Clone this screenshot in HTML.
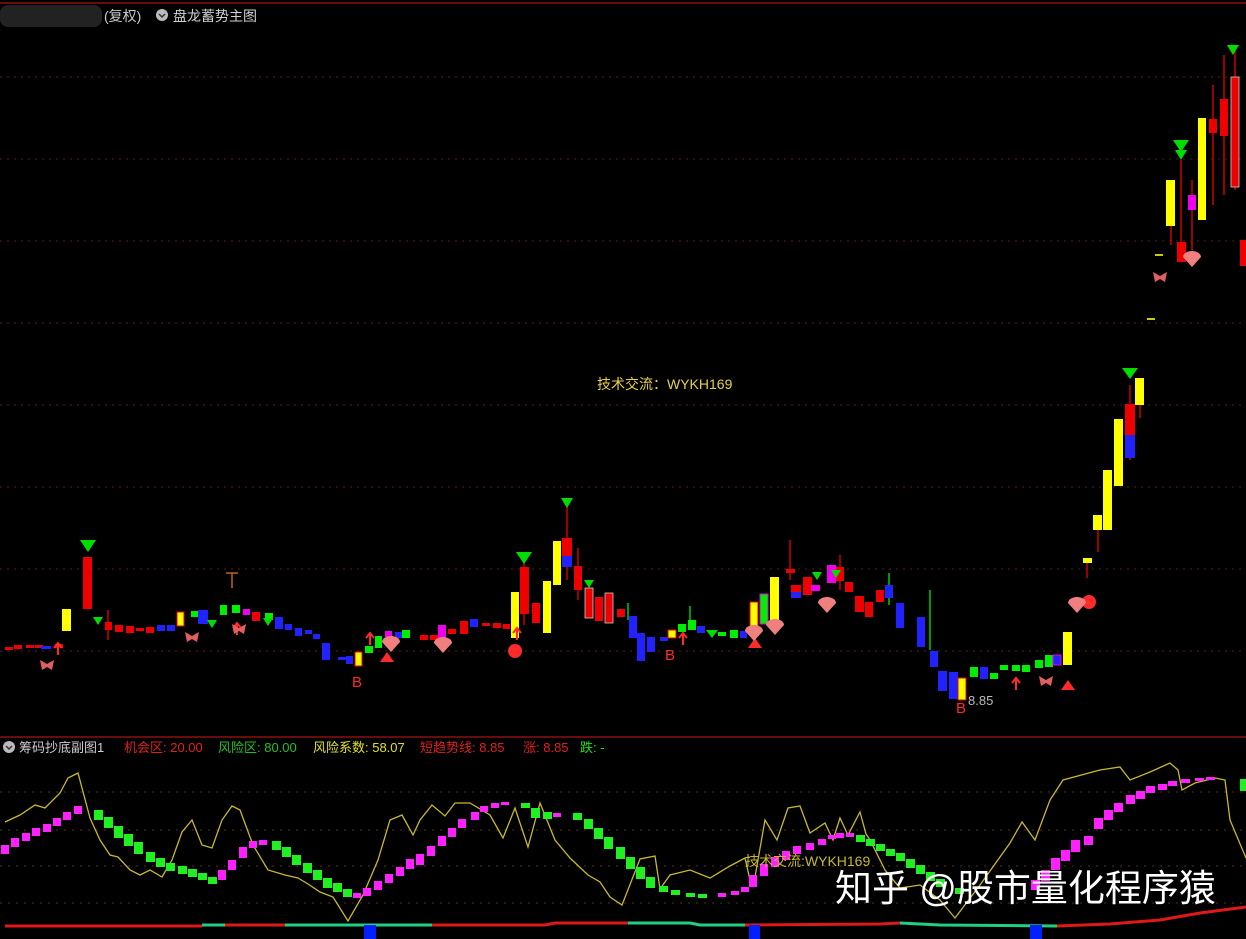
<!DOCTYPE html>
<html><head><meta charset="utf-8"><style>
html,body{margin:0;padding:0;background:#000;width:1246px;height:939px;overflow:hidden}
svg{display:block}
.t{font-family:"Liberation Sans","Noto Sans CJK SC",sans-serif}
</style></head><body>
<svg width="1246" height="939" viewBox="0 0 1246 939" xmlns="http://www.w3.org/2000/svg">
<rect width="1246" height="939" fill="#000"/>
<line x1="0" y1="3" x2="1246" y2="3" stroke="#8b1010" stroke-width="1.5"/>
<line x1="0" y1="737" x2="1246" y2="737" stroke="#8b1010" stroke-width="1.5"/>
<g stroke="#5a1a1a" stroke-dasharray="2,5" stroke-width="1">
<line x1="0" y1="77" x2="1246" y2="77"/><line x1="0" y1="159" x2="1246" y2="159"/>
<line x1="0" y1="241" x2="1246" y2="241"/><line x1="0" y1="323" x2="1246" y2="323"/>
<line x1="0" y1="405" x2="1246" y2="405"/><line x1="0" y1="487" x2="1246" y2="487"/>
<line x1="0" y1="569" x2="1246" y2="569"/><line x1="0" y1="651" x2="1246" y2="651"/>
</g>
<g stroke="#5a3010" stroke-dasharray="2,6" stroke-width="1">
<line x1="0" y1="792" x2="1246" y2="792"/><line x1="0" y1="830" x2="1246" y2="830"/>
<line x1="0" y1="866" x2="1246" y2="866"/><line x1="0" y1="903" x2="1246" y2="903"/>
</g>
<rect x="0" y="5" width="102" height="22" rx="8" fill="#2a2a2a" opacity="0.8"/>
<text x="104" y="21" class="t" font-size="14" fill="#c8c8c8">(复权)</text>
<circle cx="162" cy="15" r="6" fill="#bbb"/><path d="M159 14l3 3 3-3" stroke="#333" fill="none" stroke-width="1.5"/>
<text x="173" y="21" class="t" font-size="14" fill="#d0d0d0">盘龙蓄势主图</text>
<text x="597" y="389" class="t" font-size="14" fill="#e8d040">技术交流：WYKH169</text>
<g stroke="#c00" stroke-width="1.5">
<line x1="232" y1="573" x2="232" y2="588" stroke="#c06020"/><line x1="226" y1="573" x2="238" y2="573" stroke="#c06020"/>
<line x1="108" y1="610" x2="108" y2="640"/><line x1="524" y1="555" x2="524" y2="625"/>
<line x1="567" y1="500" x2="567" y2="580"/><line x1="578" y1="548" x2="578" y2="600"/>
<line x1="790" y1="540" x2="790" y2="580"/><line x1="840" y1="555" x2="840" y2="590"/>
<line x1="1087" y1="563" x2="1087" y2="578"/><line x1="1098" y1="530" x2="1098" y2="552"/>
<line x1="1130" y1="385" x2="1130" y2="460"/><line x1="1140" y1="405" x2="1140" y2="418"/>
<line x1="1171" y1="226" x2="1171" y2="245"/><line x1="1181" y1="160" x2="1181" y2="262"/>
<line x1="1192" y1="180" x2="1192" y2="250"/><line x1="1213" y1="85" x2="1213" y2="205"/>
<line x1="1224" y1="55" x2="1224" y2="195"/><line x1="1235" y1="50" x2="1235" y2="190"/>
</g>
<g stroke="#0c0" stroke-width="1.5">
<line x1="930" y1="590" x2="930" y2="650"/><line x1="889" y1="573" x2="889" y2="605"/>
<line x1="628" y1="603" x2="628" y2="620"/><line x1="690" y1="606" x2="690" y2="625"/>
</g>
<g>
<rect x="5" y="647" width="8" height="3" fill="#e00"/><rect x="14" y="645" width="8" height="4" fill="#e00"/><rect x="26" y="645" width="8" height="3" fill="#e00"/><rect x="35" y="645" width="8" height="3" fill="#e00"/><rect x="41" y="646" width="10" height="3" fill="#22f"/><rect x="55" y="644" width="8" height="4" fill="#e00"/>
<rect x="62" y="609" width="9" height="22" fill="#ff0"/>
<rect x="83" y="557" width="9" height="52" fill="#e00"/>
<rect x="105" y="622" width="7" height="8" fill="#e00"/><rect x="115" y="625" width="8" height="7" fill="#e00"/><rect x="126" y="626" width="8" height="7" fill="#e00"/><rect x="136" y="628" width="8" height="3" fill="#e00"/><rect x="146" y="627" width="8" height="6" fill="#e00"/><rect x="157" y="625" width="8" height="6" fill="#22f"/><rect x="167" y="625" width="8" height="6" fill="#22f"/><rect x="177" y="612" width="7" height="14" fill="#ff0" stroke="#e00"/><rect x="191" y="611" width="7" height="6" fill="#0e0"/><rect x="198" y="610" width="10" height="14" fill="#22f"/><rect x="220" y="605" width="7" height="10" fill="#0e0"/><rect x="232" y="605" width="8" height="8" fill="#0e0"/><rect x="243" y="609" width="7" height="6" fill="#e0e"/><rect x="252" y="612" width="8" height="9" fill="#e00"/><rect x="265" y="613" width="8" height="7" fill="#0e0"/><rect x="275" y="617" width="8" height="12" fill="#22f"/><rect x="285" y="624" width="7" height="6" fill="#22f"/><rect x="295" y="628" width="7" height="8" fill="#22f"/><rect x="305" y="630" width="7" height="4" fill="#22f"/><rect x="313" y="634" width="7" height="5" fill="#22f"/><rect x="322" y="643" width="8" height="17" fill="#22f"/><rect x="338" y="657" width="8" height="3" fill="#22f"/><rect x="346" y="656" width="7" height="8" fill="#22f"/><rect x="355" y="652" width="7" height="14" fill="#ff0" stroke="#e00"/><rect x="365" y="646" width="8" height="7" fill="#0e0"/><rect x="375" y="636" width="7" height="12" fill="#0e0"/><rect x="385" y="631" width="7" height="6" fill="#e0e"/><rect x="395" y="632" width="8" height="6" fill="#22f"/><rect x="402" y="630" width="8" height="8" fill="#0e0"/>
<rect x="420" y="635" width="8" height="5" fill="#e00"/><rect x="430" y="635" width="8" height="5" fill="#e00"/><rect x="438" y="625" width="8" height="14" fill="#e0e"/><rect x="448" y="629" width="8" height="5" fill="#e00"/><rect x="460" y="621" width="8" height="13" fill="#e00"/><rect x="470" y="619" width="8" height="8" fill="#22f"/><rect x="482" y="623" width="8" height="3" fill="#e00"/><rect x="493" y="623" width="8" height="5" fill="#e00"/><rect x="503" y="624" width="7" height="5" fill="#e00"/>
<rect x="511" y="592" width="8" height="46" fill="#ff0"/><rect x="520" y="567" width="9" height="47" fill="#e00"/><rect x="532" y="603" width="8" height="20" fill="#e00"/><rect x="543" y="581" width="8" height="52" fill="#ff0"/><rect x="553" y="541" width="8" height="44" fill="#ff0"/><rect x="562" y="538" width="10" height="18" fill="#e00"/><rect x="562" y="556" width="10" height="11" fill="#22f"/><rect x="574" y="566" width="8" height="24" fill="#e00"/><rect x="585" y="588" width="8" height="30" fill="#e00" stroke="#ccc" stroke-width="0.8"/><rect x="595" y="597" width="8" height="24" fill="#e00"/><rect x="605" y="593" width="8" height="30" fill="#e00" stroke="#ccc" stroke-width="0.8"/><rect x="617" y="609" width="8" height="8" fill="#e00"/><rect x="629" y="616" width="8" height="22" fill="#22f"/><rect x="637" y="633" width="8" height="28" fill="#22f"/><rect x="647" y="637" width="8" height="15" fill="#22f"/><rect x="660" y="637" width="8" height="4" fill="#22f"/><rect x="668" y="630" width="8" height="8" fill="#ff0" stroke="#e00"/><rect x="678" y="624" width="8" height="8" fill="#0e0"/><rect x="688" y="620" width="8" height="10" fill="#0e0"/><rect x="697" y="626" width="8" height="7" fill="#22f"/><rect x="718" y="632" width="8" height="4" fill="#0e0"/><rect x="730" y="630" width="8" height="8" fill="#0e0"/><rect x="740" y="631" width="7" height="7" fill="#22f"/>
<rect x="750" y="602" width="8" height="27" fill="#ff0" stroke="#e00"/><rect x="760" y="594" width="8" height="30" fill="#0e0" stroke="#e0e"/><rect x="770" y="577" width="9" height="50" fill="#ff0"/><rect x="786" y="569" width="9" height="4" fill="#e00"/><rect x="791" y="585" width="10" height="7" fill="#e00"/><rect x="791" y="592" width="10" height="6" fill="#22f"/><rect x="803" y="577" width="9" height="18" fill="#e00"/><rect x="811" y="585" width="9" height="6" fill="#e0e"/><rect x="827" y="565" width="9" height="18" fill="#e0e"/><rect x="836" y="567" width="8" height="14" fill="#e00"/><rect x="845" y="582" width="8" height="10" fill="#e00"/><rect x="855" y="596" width="9" height="16" fill="#e00"/><rect x="865" y="602" width="8" height="15" fill="#e00"/><rect x="876" y="590" width="8" height="12" fill="#e00"/><rect x="885" y="585" width="8" height="13" fill="#22f"/><rect x="896" y="603" width="8" height="25" fill="#22f"/><rect x="917" y="617" width="8" height="30" fill="#22f"/><rect x="930" y="651" width="8" height="16" fill="#22f"/><rect x="938" y="671" width="9" height="20" fill="#22f"/><rect x="949" y="672" width="9" height="27" fill="#22f"/><rect x="958" y="678" width="8" height="22" fill="#ff0" stroke="#e00"/><rect x="970" y="667" width="8" height="10" fill="#0e0"/><rect x="980" y="667" width="8" height="12" fill="#22f"/><rect x="990" y="673" width="8" height="6" fill="#0e0"/><rect x="1000" y="665" width="8" height="5" fill="#0e0"/><rect x="1012" y="665" width="8" height="6" fill="#0e0"/><rect x="1022" y="665" width="8" height="7" fill="#0e0"/><rect x="1035" y="660" width="8" height="8" fill="#0e0"/><rect x="1045" y="655" width="8" height="12" fill="#0e0"/><rect x="1053" y="655" width="8" height="10" fill="#22f" stroke="#e0e"/><rect x="1063" y="632" width="9" height="33" fill="#ff0"/>
<rect x="1083" y="558" width="9" height="5" fill="#ff0"/><rect x="1093" y="515" width="9" height="15" fill="#ff0"/><rect x="1103" y="470" width="9" height="60" fill="#ff0"/><rect x="1114" y="419" width="9" height="67" fill="#ff0"/><rect x="1125" y="404" width="10" height="31" fill="#e00"/><rect x="1125" y="435" width="10" height="23" fill="#22f"/><rect x="1135" y="378" width="9" height="27" fill="#ff0"/>
<rect x="1166" y="180" width="9" height="46" fill="#ff0"/><rect x="1177" y="242" width="9" height="20" fill="#e00"/><rect x="1188" y="195" width="8" height="15" fill="#e0e"/><rect x="1198" y="118" width="8" height="102" fill="#ff0"/><rect x="1209" y="119" width="8" height="14" fill="#e00"/><rect x="1220" y="99" width="8" height="37" fill="#e00"/><rect x="1231" y="77" width="8" height="110" fill="#e00" stroke="#ccc" stroke-width="0.8"/><rect x="1240" y="240" width="6" height="26" fill="#e00"/>
<rect x="1155" y="254" width="8" height="2" fill="#cc0"/><rect x="1147" y="318" width="8" height="2" fill="#cc0"/>
</g>
<g fill="#0d0">
<polygon points="80,540 96,540 88,552"/><polygon points="516,552 532,552 524,564"/><polygon points="1122,368 1138,368 1130,379"/>
<polygon points="1173,140 1189,140 1181,152"/><polygon points="1175,150 1187,150 1181,160"/>
<polygon points="1227,45 1239,45 1233,55"/><polygon points="561,498 573,498 567,508"/>
<polygon points="93,617 103,617 98,625"/><polygon points="207,620 217,620 212,628"/><polygon points="263,618 273,618 268,626"/><polygon points="706,630 718,630 712,638"/><polygon points="812,572 822,572 817,580"/><polygon points="831,570 841,570 836,578"/><polygon points="584,580 594,580 589,588"/>
</g>
<g fill="#ff2a2a">
<text x="352" y="687" class="t" font-size="15">B</text><text x="665" y="660" class="t" font-size="15">B</text><text x="956" y="713" class="t" font-size="15">B</text>
<polygon points="1061,690 1075,690 1068,680"/><polygon points="748,648 762,648 755,638"/><polygon points="380,662 394,662 387,652"/>
<path d="M58 655v-12M54 648l4-5 4 5" stroke="#ff2a2a" stroke-width="2" fill="none"/>
<path d="M370 645v-12M366 638l4-5 4 5" stroke="#ff2a2a" stroke-width="2" fill="none"/>
<path d="M683 645v-12M679 638l4-5 4 5" stroke="#ff2a2a" stroke-width="2" fill="none"/>
<path d="M1016 690v-12M1012 683l4-5 4 5" stroke="#ff2a2a" stroke-width="2" fill="none"/>
<path d="M517 640v-12M513 633l4-5 4 5" stroke="#ff2a2a" stroke-width="2" fill="none"/>
<path d="M237 635v-12M233 628l4-5 4 5" stroke="#ff2a2a" stroke-width="2" fill="none"/>
<circle cx="515" cy="651" r="7"/><circle cx="1089" cy="602" r="7"/>
</g>
<g fill="#e06060">
<path d="M40 660l7 4 7-4-2 10-5-3-5 3z"/><path d="M185 632l7 4 7-4-2 10-5-3-5 3z"/><path d="M232 624l7 4 7-4-2 10-5-3-5 3z"/><path d="M1153 272l7 4 7-4-2 10-5-3-5 3z"/><path d="M1039 676l7 4 7-4-2 10-5-3-5 3z"/>
</g>
<g fill="#f08080">
<path d="M382 642a9 6 0 0 1 18 0l-9 10z"/><path d="M434 643a9 6 0 0 1 18 0l-9 10z"/><path d="M745 631a9 6 0 0 1 18 0l-9 10z"/><path d="M766 625a9 6 0 0 1 18 0l-9 10z"/><path d="M818 603a9 6 0 0 1 18 0l-9 10z"/><path d="M1068 603a9 6 0 0 1 18 0l-9 10z"/><path d="M1183 257a9 6 0 0 1 18 0l-9 10z"/>
</g>
<text x="968" y="705" class="t" font-size="13" fill="#bbb">8.85</text>
<circle cx="9" cy="747" r="6" fill="#bbb"/><path d="M6 746l3 3 3-3" stroke="#333" fill="none" stroke-width="1.5"/>
<text y="752" class="t" font-size="13"><tspan x="19" fill="#ccc">筹码抄底副图1</tspan><tspan x="124" fill="#e02020">机会区: 20.00</tspan><tspan x="218" fill="#20c020">风险区: 80.00</tspan><tspan x="313" fill="#e0e020">风险系数: 58.07</tspan><tspan x="420" fill="#e02020">短趋势线: 8.85</tspan><tspan x="523" fill="#e02020">涨: 8.85</tspan><tspan x="580" fill="#20e020">跌: -</tspan></text>
<polyline fill="none" stroke="#c8b82a" stroke-width="1.3" points="5,822 20,815 35,805 45,808 60,793 68,778 78,773 90,818 100,840 110,855 118,857 130,870 140,875 150,870 162,877 172,860 182,832 192,820 202,845 212,848 222,820 232,806 240,810 253,845 268,870 285,875 298,878 308,884 320,892 333,897 348,921 363,895 378,860 390,820 402,815 413,835 420,820 432,805 445,816 455,803 470,803 490,815 503,838 515,808 528,847 540,803 555,840 570,858 588,875 600,882 610,897 622,905 640,859 655,856 660,889 670,875 690,870 710,878 730,866 745,858 750,880 755,877 765,820 777,840 788,808 800,806 810,833 825,823 833,840 840,818 848,835 860,812 866,834 870,840 885,870 900,888 920,885 940,900 955,918 980,885 1010,843 1022,822 1035,840 1050,800 1063,780 1100,770 1120,767 1130,780 1150,772 1170,763 1178,770 1182,790 1195,783 1215,778 1225,780 1230,820 1246,858"/>
<g fill="#ff20ff">
<rect x="1" y="845" width="8" height="9"/><rect x="11" y="838" width="8" height="9"/><rect x="22" y="833" width="8" height="8"/><rect x="32" y="828" width="8" height="8"/><rect x="43" y="824" width="8" height="8"/><rect x="53" y="818" width="8" height="8"/><rect x="63" y="812" width="8" height="8"/><rect x="74" y="806" width="8" height="8"/>
<rect x="218" y="870" width="8" height="10"/><rect x="228" y="860" width="8" height="10"/><rect x="239" y="847" width="8" height="11"/><rect x="249" y="841" width="8" height="7"/><rect x="259" y="840" width="8" height="5"/>
<rect x="353" y="893" width="8" height="5"/><rect x="363" y="888" width="8" height="8"/><rect x="374" y="881" width="8" height="9"/><rect x="385" y="874" width="8" height="9"/><rect x="396" y="867" width="8" height="9"/><rect x="406" y="859" width="8" height="10"/><rect x="416" y="854" width="8" height="11"/><rect x="427" y="846" width="8" height="10"/><rect x="438" y="836" width="8" height="10"/><rect x="448" y="828" width="8" height="9"/><rect x="458" y="819" width="8" height="9"/><rect x="471" y="812" width="8" height="8"/><rect x="480" y="806" width="8" height="6"/><rect x="491" y="803" width="8" height="5"/><rect x="501" y="802" width="8" height="3"/>
<rect x="553" y="813" width="8" height="4"/><rect x="718" y="893" width="8" height="4"/><rect x="731" y="891" width="8" height="4"/><rect x="741" y="887" width="8" height="5"/><rect x="749" y="875" width="8" height="12"/><rect x="760" y="864" width="8" height="12"/><rect x="771" y="857" width="8" height="10"/><rect x="782" y="851" width="8" height="9"/><rect x="793" y="846" width="8" height="8"/><rect x="806" y="843" width="8" height="7"/><rect x="818" y="839" width="8" height="6"/><rect x="836" y="833" width="8" height="5"/><rect x="846" y="833" width="8" height="4"/><rect x="828" y="835" width="8" height="4"/>
<rect x="1031" y="880" width="9" height="10"/><rect x="1041" y="870" width="9" height="11"/><rect x="1051" y="858" width="9" height="12"/><rect x="1061" y="850" width="9" height="11"/><rect x="1071" y="840" width="9" height="12"/><rect x="1084" y="836" width="9" height="9"/><rect x="1094" y="818" width="9" height="11"/><rect x="1104" y="810" width="9" height="10"/><rect x="1114" y="803" width="9" height="9"/><rect x="1126" y="795" width="9" height="9"/><rect x="1136" y="791" width="9" height="8"/><rect x="1146" y="786" width="9" height="7"/><rect x="1158" y="784" width="9" height="6"/><rect x="1168" y="781" width="9" height="5"/><rect x="1181" y="779" width="9" height="4"/><rect x="1195" y="778" width="9" height="3"/><rect x="1206" y="777" width="9" height="3"/>
</g>
<g fill="#20f020">
<rect x="94" y="810" width="9" height="10"/><rect x="104" y="817" width="9" height="11"/><rect x="114" y="826" width="9" height="12"/><rect x="124" y="834" width="9" height="12"/><rect x="134" y="842" width="9" height="12"/><rect x="146" y="852" width="9" height="10"/><rect x="156" y="858" width="9" height="9"/><rect x="166" y="863" width="9" height="8"/><rect x="178" y="866" width="9" height="8"/><rect x="188" y="869" width="9" height="8"/><rect x="198" y="873" width="9" height="7"/><rect x="208" y="877" width="9" height="7"/>
<rect x="272" y="841" width="9" height="9"/><rect x="282" y="847" width="9" height="10"/><rect x="292" y="855" width="9" height="10"/><rect x="303" y="863" width="9" height="10"/><rect x="313" y="870" width="9" height="10"/><rect x="323" y="878" width="9" height="10"/><rect x="333" y="883" width="9" height="9"/><rect x="343" y="889" width="9" height="8"/>
<rect x="521" y="803" width="9" height="5"/><rect x="531" y="808" width="9" height="10"/><rect x="543" y="812" width="9" height="7"/><rect x="573" y="813" width="9" height="7"/><rect x="584" y="819" width="9" height="10"/><rect x="594" y="828" width="9" height="11"/><rect x="604" y="837" width="9" height="12"/><rect x="616" y="847" width="9" height="12"/><rect x="626" y="857" width="9" height="12"/><rect x="636" y="867" width="9" height="12"/><rect x="646" y="877" width="9" height="11"/><rect x="659" y="886" width="9" height="6"/><rect x="671" y="890" width="9" height="5"/><rect x="686" y="893" width="9" height="4"/><rect x="698" y="894" width="9" height="4"/>
<rect x="856" y="835" width="9" height="7"/><rect x="866" y="839" width="9" height="7"/><rect x="876" y="844" width="9" height="7"/><rect x="886" y="849" width="9" height="7"/><rect x="896" y="853" width="9" height="8"/><rect x="906" y="859" width="9" height="9"/><rect x="916" y="865" width="9" height="9"/><rect x="926" y="872" width="9" height="9"/><rect x="936" y="879" width="9" height="8"/><rect x="955" y="888" width="9" height="6"/><rect x="1240" y="779" width="6" height="12"/>
</g>
<text x="745" y="866" class="t" font-size="14" fill="#c8b82a">技术交流:WYKH169</text>
<polyline fill="none" stroke="#e01818" stroke-width="3" points="5,926 202,926"/>
<polyline fill="none" stroke="#20d080" stroke-width="3" points="202,925 225,925"/>
<polyline fill="none" stroke="#e01818" stroke-width="3" points="225,925 285,925"/>
<polyline fill="none" stroke="#20d080" stroke-width="3" points="285,925 432,925"/>
<polyline fill="none" stroke="#e01818" stroke-width="3" points="432,925 545,925 555,923 628,923"/>
<polyline fill="none" stroke="#20d080" stroke-width="3" points="628,923 690,923 700,925 745,925"/>
<polyline fill="none" stroke="#e01818" stroke-width="3" points="745,925 880,924 900,923"/>
<polyline fill="none" stroke="#20d080" stroke-width="3" points="900,923 940,925 1057,926"/>
<polyline fill="none" stroke="#e01818" stroke-width="3" points="1057,926 1110,924 1160,920 1200,913 1246,907"/>
<rect x="364" y="925" width="12" height="14" fill="#0020ff"/><rect x="749" y="925" width="11" height="14" fill="#0020ff"/><rect x="1030" y="925" width="12" height="14" fill="#0020ff"/>
<text x="835" y="901" class="t" font-size="37" fill="#fff">知乎 @股市量化程序猿</text>
</svg>
</body></html>
